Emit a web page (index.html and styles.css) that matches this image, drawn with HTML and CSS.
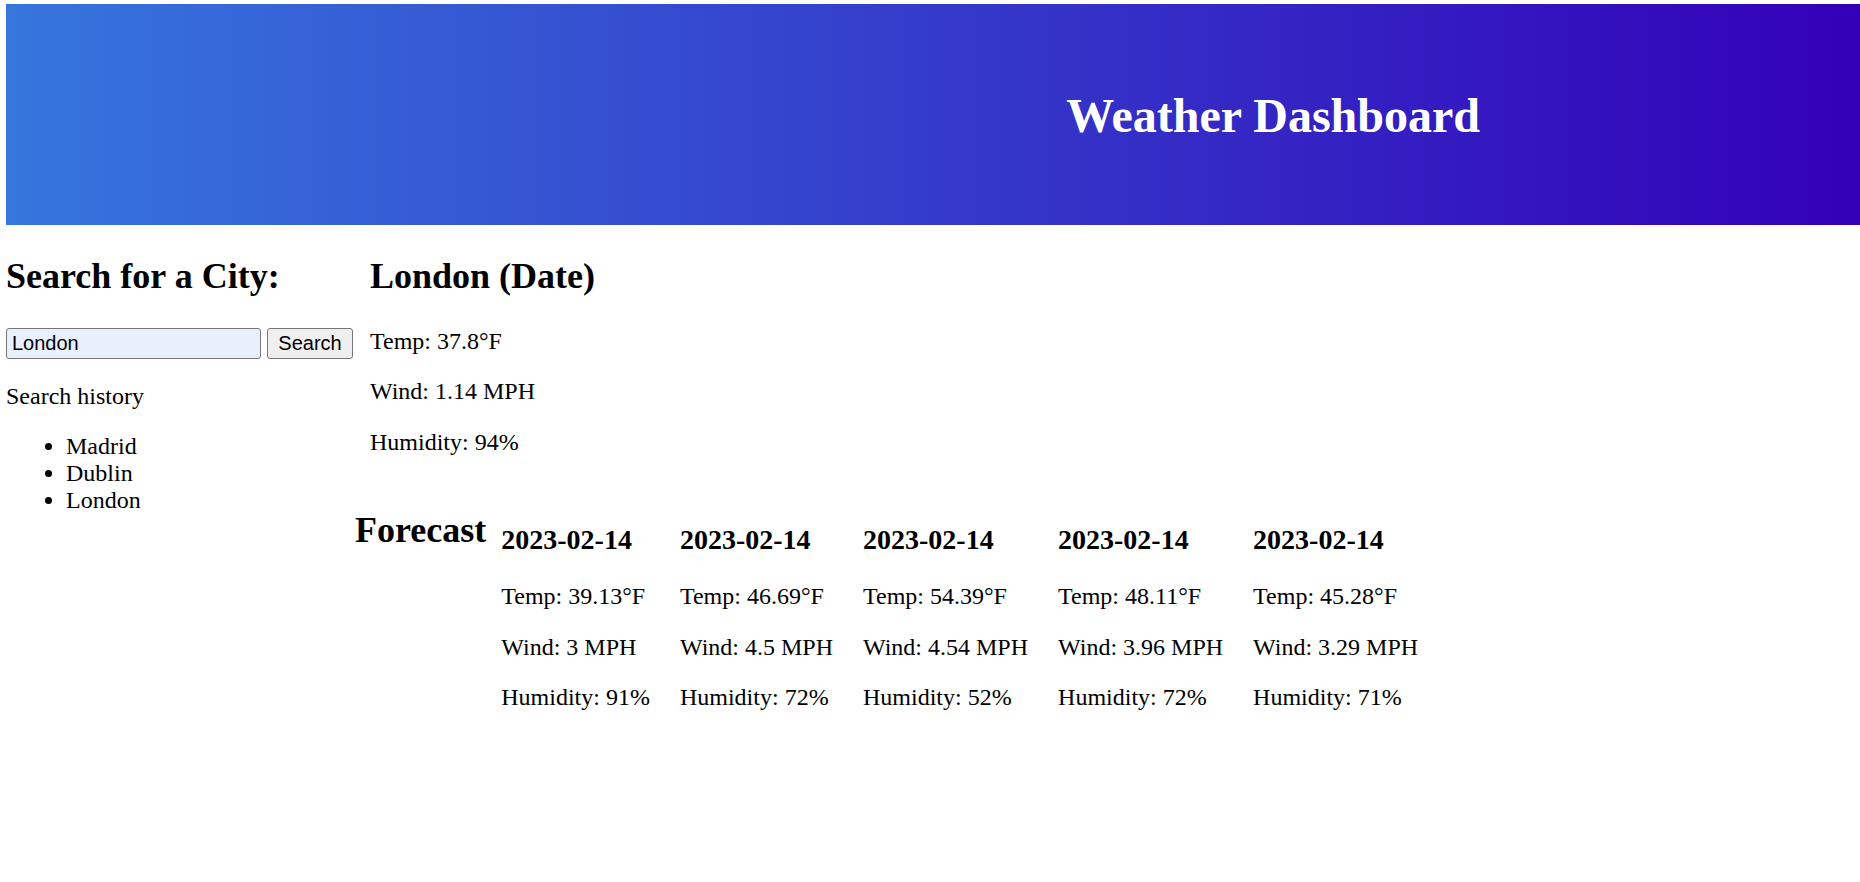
FILE: index.html
```html
<!DOCTYPE html>
<html lang="en">
<head>
<meta charset="utf-8">
<title>Weather Dashboard</title>
<link rel="stylesheet" href="styles.css">
</head>
<body>
<header class="hero">
  <h1 class="hero-title">Weather Dashboard</h1>
</header>
<div class="layout">
  <aside class="sidebar">
    <h2 class="section-title">Search for a City:</h2>
    <form class="search-form">
      <input class="search-input" type="text" value="London">
      <button class="search-btn" type="button">Search</button>
    </form>
    <p class="text">Search history</p>
    <ul class="history">
      <li>Madrid</li>
      <li>Dublin</li>
      <li>London</li>
    </ul>
  </aside>
  <main class="content">
    <section class="current">
      <h2 class="section-title">London (Date)</h2>
      <p class="text">Temp: 37.8°F</p>
      <p class="text">Wind: 1.14 MPH</p>
      <p class="text">Humidity: 94%</p>
    </section>
    <section class="forecast">
      <h2 class="section-title forecast-title">Forecast</h2>
      <div class="cards">
        <div class="card">
          <h3 class="card-date">2023-02-14</h3>
          <p class="text">Temp: 39.13°F</p>
          <p class="text">Wind: 3 MPH</p>
          <p class="text">Humidity: 91%</p>
        </div>
        <div class="card">
          <h3 class="card-date">2023-02-14</h3>
          <p class="text">Temp: 46.69°F</p>
          <p class="text">Wind: 4.5 MPH</p>
          <p class="text">Humidity: 72%</p>
        </div>
        <div class="card">
          <h3 class="card-date">2023-02-14</h3>
          <p class="text">Temp: 54.39°F</p>
          <p class="text">Wind: 4.54 MPH</p>
          <p class="text">Humidity: 52%</p>
        </div>
        <div class="card">
          <h3 class="card-date">2023-02-14</h3>
          <p class="text">Temp: 48.11°F</p>
          <p class="text">Wind: 3.96 MPH</p>
          <p class="text">Humidity: 72%</p>
        </div>
        <div class="card">
          <h3 class="card-date">2023-02-14</h3>
          <p class="text">Temp: 45.28°F</p>
          <p class="text">Wind: 3.29 MPH</p>
          <p class="text">Humidity: 71%</p>
        </div>
      </div>
    </section>
  </main>
</div>
</body>
</html>
```
FILE: styles.css
```css
html, body {
  background: #ffffff;
}

body {
  margin: 4px 0 0 6px;
  font-family: "Liberation Serif", "Times New Roman", serif;
  font-size: 24px;
  line-height: 1.107;
  color: #000000;
}

.hero {
  height: 221px;
  box-sizing: border-box;
  display: flex;
  justify-content: flex-end;
  align-items: flex-start;
  padding: 85px 380px 0 0;
  background: linear-gradient(to right, #3676dd, #3300b8);
}

.hero-title {
  margin: 0;
  font-size: 48px;
  font-weight: bold;
  color: #ffffff;
}

.layout {
  display: flex;
  align-items: flex-start;
}

.sidebar {
  width: 349px;
  flex: 0 0 349px;
}

.section-title {
  font-size: 36px;
  font-weight: bold;
  margin: 32px 0 31px;
}

.search-form {
  display: flex;
  gap: 6px;
  margin: 0;
}

.search-input {
  width: 255px;
  height: 31px;
  box-sizing: border-box;
  margin: 0;
  padding: 0 5px;
  border: 1px solid #767676;
  border-radius: 3px;
  background: #e8f0fe;
  font-family: "Liberation Sans", Arial, sans-serif;
  font-size: 20px;
  color: #000000;
}

.search-btn {
  width: 86px;
  height: 31px;
  box-sizing: border-box;
  margin: 0;
  padding: 0;
  border: 1px solid #767676;
  border-radius: 3px;
  background: #efefef;
  font-family: "Liberation Sans", Arial, sans-serif;
  font-size: 20px;
  color: #000000;
}

.text {
  font-size: 24px;
  margin: 24px 0;
}

.history {
  margin: 24px 0;
  padding-left: 60px;
  font-size: 24px;
}

.content {
  flex: 1 1 auto;
}

.current {
  padding-left: 15px;
}

.forecast {
  display: flex;
  align-items: flex-start;
}

.forecast-title {
  margin: 31px 0;
}

.cards {
  display: flex;
  gap: 30px;
  padding: 16.5px 15px 15px 15px;
}

.card-date {
  font-size: 28px;
  font-weight: bold;
  margin: 28px 0;
}
```
